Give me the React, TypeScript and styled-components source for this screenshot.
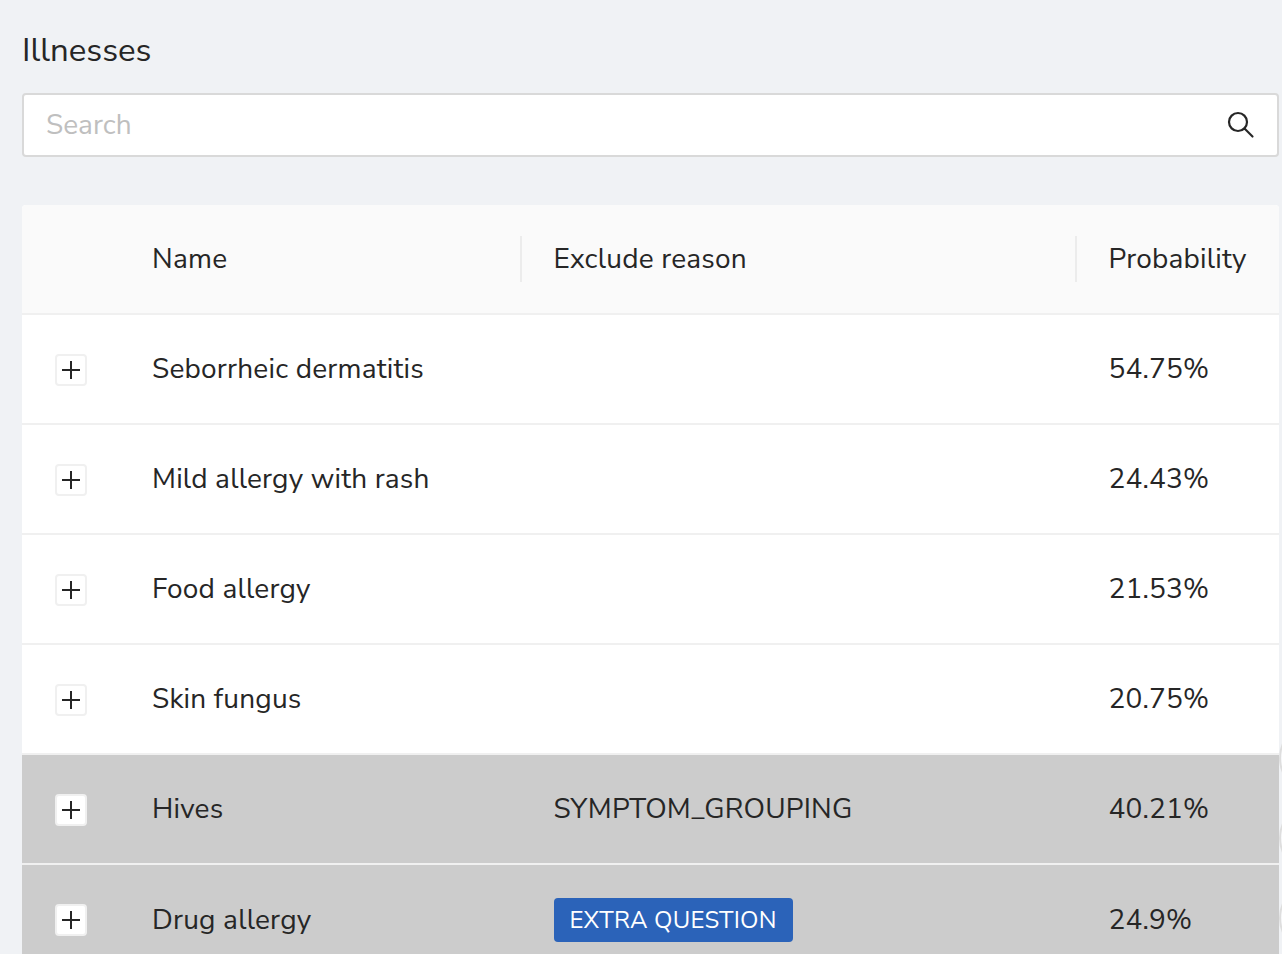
import React from "react";
import styled, { createGlobalStyle } from "styled-components";

const Global = createGlobalStyle`
  html, body { margin: 0; padding: 0; background: #f0f2f5; }
  body { font-family: "Nunito Sans", Lato, "Open Sans", sans-serif; color: #262626; overflow: hidden; }
`;
const Page = styled.div`
  height: 954px; padding: 31px 3px 0 22px; box-sizing: border-box; overflow: hidden; position: relative;
`;
const Title = styled.h1`
  margin: 0; font-size: 33px; line-height: 40px; font-weight: 400; color: #262626;
`;
const SearchBox = styled.div`
  margin-top: 22px; height: 64px; box-sizing: border-box; background: #fff; border: 2px solid #d9d9d9; border-radius: 4px;
  display: flex; align-items: center; justify-content: space-between; padding: 0 22px;
`;
const Placeholder = styled.span`font-size: 28px; color: #bfbfbf;`;
const Table = styled.div`margin-top: 48px; background: #fff; border-radius: 4px 4px 0 0; overflow: hidden;`;
const Row = styled.div<{ $muted?: boolean; $head?: boolean; $tall?: boolean }>`
  display: grid; grid-template-columns: 130px 369.5px 555px 202.5px; align-items: center;
  height: ${p => (p.$tall ? "112px" : "110px")}; box-sizing: border-box;
  border-bottom: 2px solid #f0f0f0; font-size: 28px; letter-spacing: 0.2px; color: #262626;
  background: ${p => (p.$muted ? "#cccccc" : p.$head ? "#fafafa" : "#fff")};
`;
const HeadCell = styled.div<{ $sep?: boolean }>`
  padding-left: ${p => (p.$sep ? "32px" : "0")}; position: relative; white-space: nowrap;
  ${p => p.$sep ? `&::before { content: ""; position: absolute; left: -1.5px; top: 50%; transform: translateY(-50%); width: 2px; height: 46px; background: #ececec; }` : ""}
`;
const PlainCell = styled.div`padding-left: 32px; white-space: nowrap;`;
const Expander = styled.div<{ $tall?: boolean }>`
  margin: ${p => (p.$tall ? "0" : "2px")} 0 0 33px; width: 32px; height: 32px; box-sizing: border-box; background: #fff; border: 2px solid #f0f0f0; border-radius: 4px;
  display: flex; align-items: center; justify-content: center;
`;
const Tag = styled.span`
  display: inline-block; height: 44px; line-height: 44px; padding: 0 16px; background: #2b63b9; color: #fff; border-radius: 4px; font-size: 24px; letter-spacing: 0.22px;
`;
const Arc = styled.div<{ $top: number }>`
  position: absolute; left: 1279px; top: ${p => p.$top}px; width: 72px; height: 72px; border: 2px solid #dedede; background: #f6f7f9; border-radius: 50%; box-sizing: border-box;
`;
const PlusIcon = () => (
  <svg width="20" height="20" viewBox="0 0 20 20"><path d="M10 1v18M1 10h18" stroke="#262626" strokeWidth="2" fill="none" /></svg>
);
const SearchIcon = () => (
  <svg width="28" height="28" viewBox="0 0 28 28" fill="none" stroke="#262626" strokeWidth="2.2">
    <circle cx="11" cy="11" r="9" /><path d="M17.5 17.5l8 8" strokeLinecap="round" />
  </svg>
);
const rows = [
  ["Seborrheic dermatitis", "", "54.75%"],
  ["Mild allergy with rash", "", "24.43%"],
  ["Food allergy", "", "21.53%"],
  ["Skin fungus", "", "20.75%"],
  ["Hives", "SYMPTOM_GROUPING", "40.21%"],
  ["Drug allergy", "TAG", "24.9%"],
];
export default function App() {
  return (
    <Page>
      <Global />
      <Title>Illnesses</Title>
      <SearchBox><Placeholder>Search</Placeholder><SearchIcon /></SearchBox>
      <Table>
        <Row $head>
          <div />
          <HeadCell>Name</HeadCell>
          <HeadCell $sep>Exclude reason</HeadCell>
          <HeadCell $sep>Probability</HeadCell>
        </Row>
        {rows.map((r, i) => (
          <Row key={r[0]} $muted={i >= 4} $tall={r[1] === "TAG"}>
            <Expander $tall={r[1] === "TAG"}><PlusIcon /></Expander>
            <div>{r[0]}</div>
            <PlainCell>{r[1] === "TAG" ? <Tag>EXTRA QUESTION</Tag> : r[1]}</PlainCell>
            <PlainCell>{r[2]}</PlainCell>
          </Row>
        ))}
      </Table>
      <Arc $top={722} /><Arc $top={802} /><Arc $top={882} />
    </Page>
  );
}
